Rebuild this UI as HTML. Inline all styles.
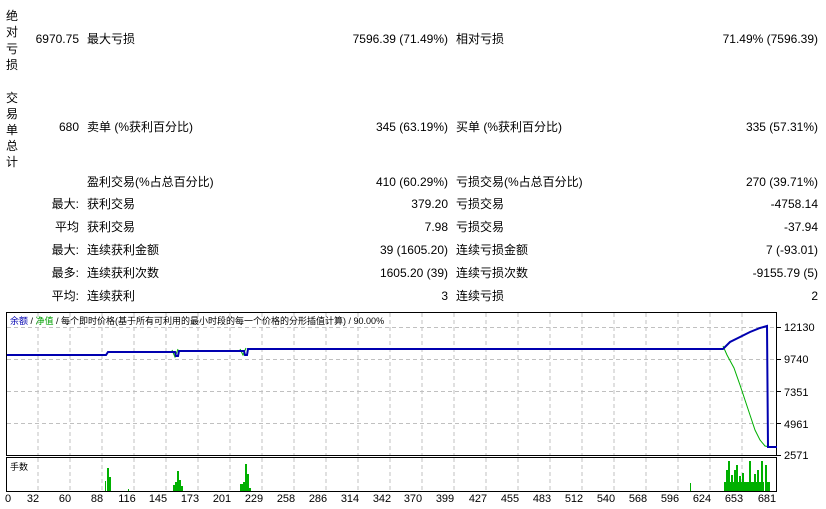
<!DOCTYPE html>
<html><head><meta charset="utf-8"><style>
body{margin:0;width:826px;height:509px;background:#fff;position:relative;overflow:hidden;font-family:"Liberation Sans","Noto Sans CJK SC",sans-serif;font-size:12px;color:#000}
.t{position:absolute;white-space:nowrap;line-height:14px}
.r{text-align:right}
</style></head><body>
<div class="t" style="left:6px;top:8px;line-height:16.3px;width:14px">绝<br>对<br>亏<br>损</div>
<div class="t" style="left:6px;top:90px;line-height:16px;width:14px">交<br>易<br>单<br>总<br>计</div>

<div class="t r" style="right:747px;top:32px">6970.75</div>
<div class="t" style="left:87px;top:32px">最大亏损</div>
<div class="t r" style="right:378px;top:32px">7596.39 (71.49%)</div>
<div class="t" style="left:456px;top:32px">相对亏损</div>
<div class="t r" style="right:8px;top:32px">71.49% (7596.39)</div>

<div class="t r" style="right:747px;top:120px">680</div>
<div class="t" style="left:87px;top:120px">卖单 (%获利百分比)</div>
<div class="t r" style="right:378px;top:120px">345 (63.19%)</div>
<div class="t" style="left:456px;top:120px">买单 (%获利百分比)</div>
<div class="t r" style="right:8px;top:120px">335 (57.31%)</div>

<div class="t" style="left:87px;top:175px">盈利交易(%占总百分比)</div>
<div class="t r" style="right:378px;top:175px">410 (60.29%)</div>
<div class="t" style="left:456px;top:175px">亏损交易(%占总百分比)</div>
<div class="t r" style="right:8px;top:175px">270 (39.71%)</div>

<div class="t r" style="right:747px;top:197px">最大:</div>
<div class="t" style="left:87px;top:197px">获利交易</div>
<div class="t r" style="right:378px;top:197px">379.20</div>
<div class="t" style="left:456px;top:197px">亏损交易</div>
<div class="t r" style="right:8px;top:197px">-4758.14</div>

<div class="t r" style="right:747px;top:220px">平均</div>
<div class="t" style="left:87px;top:220px">获利交易</div>
<div class="t r" style="right:378px;top:220px">7.98</div>
<div class="t" style="left:456px;top:220px">亏损交易</div>
<div class="t r" style="right:8px;top:220px">-37.94</div>

<div class="t r" style="right:747px;top:243px">最大:</div>
<div class="t" style="left:87px;top:243px">连续获利金额</div>
<div class="t r" style="right:378px;top:243px">39 (1605.20)</div>
<div class="t" style="left:456px;top:243px">连续亏损金额</div>
<div class="t r" style="right:8px;top:243px">7 (-93.01)</div>

<div class="t r" style="right:747px;top:266px">最多:</div>
<div class="t" style="left:87px;top:266px">连续获利次数</div>
<div class="t r" style="right:378px;top:266px">1605.20 (39)</div>
<div class="t" style="left:456px;top:266px">连续亏损次数</div>
<div class="t r" style="right:8px;top:266px">-9155.79 (5)</div>

<div class="t r" style="right:747px;top:289px">平均:</div>
<div class="t" style="left:87px;top:289px">连续获利</div>
<div class="t r" style="right:378px;top:289px">3</div>
<div class="t" style="left:456px;top:289px">连续亏损</div>
<div class="t r" style="right:8px;top:289px">2</div>

<svg width="826" height="509" style="position:absolute;left:0;top:0" xmlns="http://www.w3.org/2000/svg">
<g stroke="#c0c0c0" stroke-dasharray="4,3" stroke-width="1">
<path d="M38 313V456M70 313V456M102 313V456M134 313V456M166 313V456M198 313V456M230 313V456M262 313V456M294 313V456M326 313V456M358 313V456M390 313V456M422 313V456M454 313V456M486 313V456M518 313V456M550 313V456M582 313V456M614 313V456M646 313V456M678 313V456M710 313V456M742 313V456"/>
<path d="M38 458V491M70 458V491M102 458V491M134 458V491M166 458V491M198 458V491M230 458V491M262 458V491M294 458V491M326 458V491M358 458V491M390 458V491M422 458V491M454 458V491M486 458V491M518 458V491M550 458V491M582 458V491M614 458V491M646 458V491M678 458V491M710 458V491M742 458V491"/>
<path d="M7 327.5H777M7 359.5H777M7 391.5H777M7 423.5H777"/>
</g>
<rect x="6.5" y="312.5" width="770" height="143" fill="none" stroke="#000"/>
<rect x="6.5" y="457.5" width="770" height="34" fill="none" stroke="#000"/>
<g stroke="#000"><path d="M777 327.5h4M777 359.5h4M777 391.5h4M777 423.5h4M777 455.5h4"/></g>
<path d="M172 350l3 7 3-8M240 349l3 6 3-7M723 346L727 355L734 368L740 385L745 400L750 415L755 430L760 440L765 446L770 447" fill="none" stroke="#00b000" stroke-width="1"/>
<path d="M7 355H106L108 352H175L176 356L178 356L179 351H244L245 355L247 355L248 349H395L396 349H723L730 342L740 337L750 332L760 328L767 326L768 447H777" fill="none" stroke="#0000b0" stroke-width="2"/>
<g fill="#00b000">
<rect x="105" y="481" width="1" height="10"/><rect x="107" y="468" width="2" height="23"/><rect x="109" y="477" width="2" height="14"/>
<rect x="128" y="489" width="1" height="2"/>
<rect x="173" y="485" width="2" height="6"/><rect x="175" y="482" width="2" height="9"/><rect x="177" y="471" width="2" height="20"/><rect x="179" y="480" width="2" height="11"/><rect x="181" y="486" width="2" height="5"/>
<rect x="240" y="484" width="3" height="7"/><rect x="243" y="482" width="2" height="9"/><rect x="245" y="464" width="2" height="27"/><rect x="247" y="474" width="2" height="17"/><rect x="249" y="488" width="2" height="3"/>
<rect x="690" y="483" width="1" height="8"/>
<rect x="724" y="482" width="40" height="9"/>
<rect x="726" y="470" width="2" height="21"/><rect x="728" y="461" width="2" height="30"/><rect x="731" y="475" width="2" height="16"/><rect x="734" y="470" width="2" height="21"/><rect x="736" y="465" width="2" height="26"/><rect x="739" y="476" width="2" height="15"/><rect x="742" y="473" width="2" height="18"/><rect x="749" y="461" width="2" height="30"/><rect x="754" y="474" width="2" height="17"/><rect x="757" y="470" width="2" height="21"/><rect x="761" y="461" width="2" height="30"/><rect x="765" y="465" width="2" height="26"/><rect x="767" y="482" width="3" height="9"/>
</g>
<g font-family="Liberation Sans,Noto Sans CJK SC,sans-serif" font-size="11" fill="#000">
<text x="784" y="331">12130</text><text x="784" y="363">9740</text><text x="784" y="396">7351</text><text x="784" y="428">4961</text><text x="784" y="459">2571</text>
<text x="10" y="470" font-size="9">手数</text>
<g text-anchor="middle">
<text x="8" y="502">0</text><text x="33" y="502">32</text><text x="65" y="502">60</text><text x="97" y="502">88</text><text x="127" y="502">116</text><text x="158" y="502">145</text><text x="190" y="502">173</text><text x="222" y="502">201</text><text x="254" y="502">229</text><text x="286" y="502">258</text><text x="318" y="502">286</text><text x="350" y="502">314</text><text x="382" y="502">342</text><text x="413" y="502">370</text><text x="445" y="502">399</text><text x="478" y="502">427</text><text x="510" y="502">455</text><text x="542" y="502">483</text><text x="574" y="502">512</text><text x="606" y="502">540</text><text x="638" y="502">568</text><text x="670" y="502">596</text><text x="702" y="502">624</text><text x="734" y="502">653</text><text x="767" y="502">681</text>
</g>
<text x="10" y="324" font-size="9"><tspan fill="#0000b0">余额</tspan> / <tspan fill="#00a000">净值</tspan> / 每个即时价格(基于所有可利用的最小时段的每一个价格的分形插值计算) / 90.00%</text>
</g>
</svg>
</body></html>
